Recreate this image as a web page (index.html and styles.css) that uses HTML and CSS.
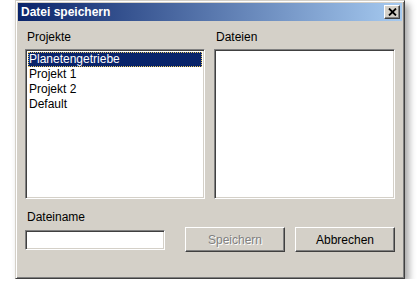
FILE: index.html
```html
<!DOCTYPE html>
<html>
<head>
  <title>Datei speichern</title>
  <link rel="stylesheet" href="styles.css">
</head>
<body>
  <div class="window">
    <div class="titlebar">
      <span class="title">Datei speichern</span>
      <button type="button" class="close-btn" aria-label="Schließen">
        <svg width="9" height="8" viewBox="0 0 9 8">
          <path d="M1 0.5L8 7.5M8 0.5L1 7.5" stroke="#000" stroke-width="1.8"/>
        </svg>
      </button>
    </div>
    <div class="content">
      <div class="lists">
        <div class="list-col">
          <label class="field-label">Projekte</label>
          <ul class="listbox">
            <li class="selected">Planetengetriebe</li>
            <li>Projekt 1</li>
            <li>Projekt 2</li>
            <li>Default</li>
          </ul>
        </div>
        <div class="list-col">
          <label class="field-label">Dateien</label>
          <ul class="listbox"></ul>
        </div>
      </div>
      <div class="bottom-row">
        <div class="name-col">
          <label class="field-label">Dateiname</label>
          <input type="text" class="textbox">
        </div>
        <button type="button" class="btn" disabled>Speichern</button>
        <button type="button" class="btn">Abbrechen</button>
      </div>
    </div>
  </div>
</body>
</html>
```

FILE: styles.css
```css
body {
  margin: 0;
  padding: 0 0 0 15px;
  background-color: #fff;
  font-family: "Liberation Sans", Arial, sans-serif;
  font-size: 12px;
  color: #000;
}

.window {
  width: 390px;
  height: 279px;
  box-sizing: border-box;
  background-color: #d4d0c8;
  border: 1px solid;
  border-color: #d4d0c8 #404040 #404040 #d4d0c8;
  box-shadow: inset 1px 1px #fff, inset -1px -1px #808080, 4px 4px 7px rgba(0, 0, 0, 0.35);
  padding: 2px;
}

.titlebar {
  height: 18px;
  display: flex;
  align-items: center;
  justify-content: space-between;
  padding: 0 2px 0 3px;
  background: linear-gradient(to right, #0a246a, #a6caf0);
}

.title {
  color: #fff;
  font-weight: bold;
  font-size: 12px;
}

.close-btn {
  width: 16px;
  height: 14px;
  padding: 0;
  display: flex;
  align-items: center;
  justify-content: center;
  background-color: #d4d0c8;
  border: 1px solid;
  border-color: #fff #404040 #404040 #fff;
  box-shadow: inset -1px -1px #808080;
}

.content {
  padding: 9px 6px 0 7px;
}

.lists {
  display: flex;
  gap: 9px;
}

.list-col {
  display: flex;
  flex-direction: column;
}

.list-col:first-child {
  width: 180px;
}

.list-col:last-child {
  width: 181px;
}

.field-label {
  display: block;
  line-height: 14px;
  margin: 0 0 5px 2px;
}

.listbox,
.textbox {
  box-sizing: border-box;
  background-color: #fff;
  border: 1px solid;
  border-color: #808080 #fff #fff #808080;
  box-shadow: inset 1px 1px #404040, inset -1px -1px #d4d0c8;
}

.listbox {
  list-style: none;
  margin: 0;
  padding: 2px;
  height: 150px;
}

.listbox li {
  line-height: 15px;
  padding-left: 1px;
}

.listbox li.selected {
  background-color: #0a246a;
  color: #fff;
  outline: 1px dotted #e8c860;
  outline-offset: -1px;
}

.bottom-row {
  display: flex;
  align-items: flex-start;
  margin-top: 11px;
}

.name-col {
  width: 140px;
  margin-right: 20px;
}

.field-label + .textbox {
  margin-top: 1px;
}

.textbox {
  width: 140px;
  height: 20px;
  font: inherit;
  outline: none;
}

.btn {
  width: 100px;
  height: 25px;
  margin-top: 17px;
  padding: 0;
  font: inherit;
  color: #000;
  background-color: #d4d0c8;
  border: 1px solid;
  border-color: #fff #404040 #404040 #fff;
  box-shadow: inset -1px -1px #808080;
}

.btn + .btn {
  margin-left: 10px;
}

.btn:disabled {
  color: #808080;
  text-shadow: 1px 1px #fff;
}
```
